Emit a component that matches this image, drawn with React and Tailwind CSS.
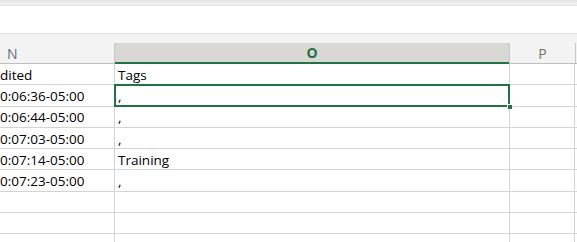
const rows = [
  { n: "dited", o: "Tags" },
  { n: "0:06:36-05:00", o: ",", selected: true },
  { n: "0:06:44-05:00", o: "," },
  { n: "0:07:03-05:00", o: "," },
  { n: "0:07:14-05:00", o: "Training" },
  { n: "0:07:23-05:00", o: "," },
  { n: "", o: "" },
  { n: "", o: "" },
  { n: "", o: "" },
];

const App = () => {
  return (
    <div
      className="w-[577px] h-[242px] overflow-hidden bg-white text-[13.5px] text-black"
      style={{ fontFamily: '"Open Sans", "Liberation Sans", sans-serif' }}
    >
      {/* ribbon bottom */}
      <div className="h-[6px] bg-gradient-to-b from-[#e3e3e3] to-[#f2f2f2] border-b border-[#e6e6e6]" />
      <div className="h-[28px] bg-white border-b border-[#e1e1e1]" />
      <div className="h-[9px] bg-[#f3f3f3]" />

      {/* column headers */}
      <div className="flex h-[21px] bg-[#f3f3f3]">
        <div className="w-[115px] shrink-0 border-r border-[#c6c6c6] border-b border-b-[#bfbfbf] pl-[7px] flex items-center text-[14px] text-[#5f6f86]">
          N
        </div>
        <div className="w-[394px] shrink-0 bg-[#d9d7d4] border-b-2 border-[#217346] flex items-center justify-center text-[14px] font-bold text-[#217346]">
          O
        </div>
        <div className="w-[66px] shrink-0 border-l border-[#c6c6c6] border-b border-b-[#bfbfbf] flex items-center justify-center text-[14px] text-[#7a7068]">
          P
        </div>
        <div className="flex-1 border-l border-[#c6c6c6] border-b border-b-[#bfbfbf]" />
      </div>

      {/* cells */}
      {rows.map((r, i) => (
        <div key={i} className="flex h-[21.3px]">
          <div className="w-[115px] shrink-0 border-r border-b border-[#d4d4d4] flex items-end leading-none whitespace-nowrap overflow-hidden">
            <span className="pb-[2px]">{r.n}</span>
          </div>
          <div className="relative w-[394px] shrink-0 border-b border-[#d4d4d4] flex items-end pl-[3px] leading-none">
            <span className="pb-[2px]">{r.o}</span>
            {r.selected && (
              <>
                <div className="absolute left-[-1px] top-[-1px] right-[-1px] bottom-[-1px] border-2 border-[#217346]" />
                <div className="absolute right-[-4px] bottom-[-4px] w-[6px] h-[6px] bg-[#217346] border border-white" />
              </>
            )}
          </div>
          <div className="w-[66px] shrink-0 border-l border-r border-b border-[#d4d4d4]" />
          <div className="flex-1 border-b border-[#d4d4d4]" />
        </div>
      ))}
    </div>
  );
};

export default App;
